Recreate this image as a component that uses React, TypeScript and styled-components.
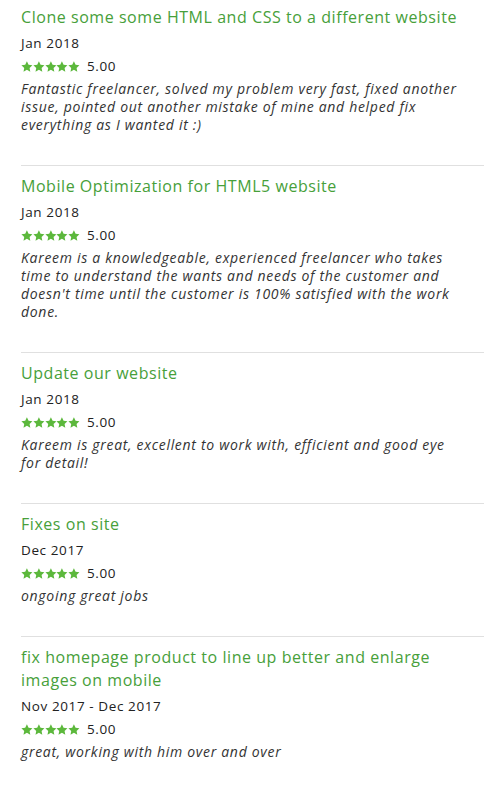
import * as React from "react";
import styled, { createGlobalStyle } from "styled-components";

const Global = createGlobalStyle`
  html, body {
    margin: 0;
    padding: 0;
    background: #fff;
  }
  body {
    font-family: "Open Sans", "Liberation Sans", sans-serif;
  }
`;

const List = styled.div`
  padding-left: 21px;
  padding-top: 6px;
`;

const Item = styled.div`
  padding-bottom: 31px;
  & + & {
    border-top: 1px solid #e0e0e0;
    padding-top: 9px;
  }
`;

const Title = styled.div`
  font-size: 16px;
  line-height: 23px;
  font-weight: 500;
  letter-spacing: 0.55px;
  color: #47a03a;
  padding-right: 20px;
`;

const Date = styled.div`
  margin-top: 4px;
  font-size: 13.5px;
  line-height: 20px;
  letter-spacing: 0.6px;
  color: #222;
`;

const Rating = styled.div`
  margin-top: 3px;
  display: flex;
  align-items: center;
  height: 20px;
  gap: 7px;
  font-size: 13.5px;
  letter-spacing: 0.6px;
  color: #222;
`;

const Stars = styled.div`
  display: flex;
`;

const Comment = styled.div`
  margin-top: 4px;
  font-size: 14px;
  line-height: 18px;
  letter-spacing: 0.7px;
  font-style: italic;
  color: #333;
  padding-right: 20px;
`;

function Star() {
  return (
    <svg width="11.8" height="11" viewBox="0 0 24 23">
      <path
        d="M12 0.5l3.5 7.4 8 1-5.9 5.5 1.5 8-7.1-3.9-7.1 3.9 1.5-8L0.5 8.9l8-1z"
        fill="#5cb83c"
      />
    </svg>
  );
}

type Review = {
  title: string;
  date: string;
  comment: string;
};

const reviews: Review[] = [
  {
    title: "Clone some some HTML and CSS to a different website",
    date: "Jan 2018",
    comment:
      "Fantastic freelancer, solved my problem very fast, fixed another issue, pointed out another mistake of mine and helped fix everything as I wanted it :)",
  },
  {
    title: "Mobile Optimization for HTML5 website",
    date: "Jan 2018",
    comment:
      "Kareem is a knowledgeable, experienced freelancer who takes time to understand the wants and needs of the customer and doesn't time until the customer is 100% satisfied with the work done.",
  },
  {
    title: "Update our website",
    date: "Jan 2018",
    comment:
      "Kareem is great, excellent to work with, efficient and good eye for detail!",
  },
  {
    title: "Fixes on site",
    date: "Dec 2017",
    comment: "ongoing great jobs",
  },
  {
    title: "fix homepage product to line up better and enlarge images on mobile",
    date: "Nov 2017 - Dec 2017",
    comment: "great, working with him over and over",
  },
];

export default function App() {
  return (
    <>
      <Global />
      <List>
        {reviews.map((r) => (
          <Item key={r.title}>
            <Title>{r.title}</Title>
            <Date>{r.date}</Date>
            <Rating>
              <Stars>
                {[0, 1, 2, 3, 4].map((i) => (
                  <Star key={i} />
                ))}
              </Stars>
              <span>5.00</span>
            </Rating>
            <Comment>{r.comment}</Comment>
          </Item>
        ))}
      </List>
    </>
  );
}
